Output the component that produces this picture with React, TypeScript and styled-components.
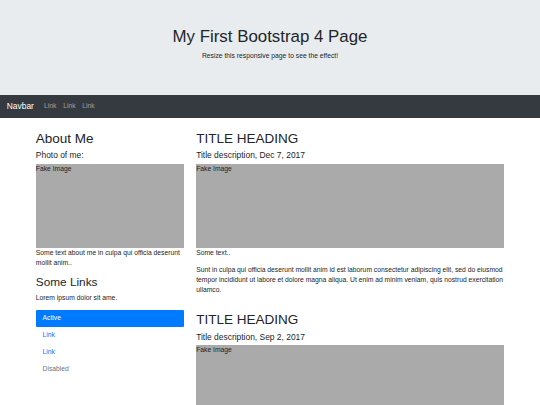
import React from "react";
import styled, { createGlobalStyle } from "styled-components";

const GlobalStyle = createGlobalStyle`
  *, *::before, *::after { box-sizing: border-box; }
  html, body { margin: 0; padding: 0; }
  body {
    font-family: "Liberation Sans", Arial, sans-serif;
    font-size: 6.75px;
    line-height: 1.5;
    color: #212529;
    background: #fff;
  }
`;

const Jumbotron = styled.header`
  background: #e9ecef;
  padding: 27px 13.5px;
  text-align: center;
`;

const Title = styled.h1`
  margin: 0 0 3.375px;
  font-size: 16.875px;
  line-height: 1.2;
  font-weight: 500;
`;

const Lead = styled.p`
  margin: 0 0 6.75px;
`;

const Navbar = styled.nav`
  display: flex;
  align-items: center;
  background: #343a40;
  padding: 3.375px 6.75px;
`;

const Brand = styled.a`
  color: #fff;
  font-size: 8.4375px;
  line-height: 1.5;
  padding: 1.32px 0;
  margin-right: 6.75px;
  text-decoration: none;
`;

const NavList = styled.ul`
  display: flex;
  list-style: none;
  margin: 0;
  padding: 0;
`;

const NavLink = styled.a`
  display: block;
  padding: 3.375px;
  color: rgba(255, 255, 255, 0.5);
  text-decoration: none;
`;

const Container = styled.main`
  width: 481px;
  margin: 12.66px auto 0;
  padding: 0 6.33px;
`;

const Row = styled.div`
  display: flex;
  margin: 0 -6.33px;
`;

const Column = styled.section<{ $span: number }>`
  flex: 0 0 ${(p) => (p.$span / 12) * 100}%;
  max-width: ${(p) => (p.$span / 12) * 100}%;
  padding: 0 6.33px;
`;

const H2 = styled.h2`
  margin: 0 0 3.375px;
  font-size: 13.5px;
  line-height: 1.2;
  font-weight: 500;
`;

const H3 = styled.h3`
  margin: 0 0 3.375px;
  font-size: 11.8125px;
  line-height: 1.2;
  font-weight: 500;
`;

const H5 = styled.h5`
  margin: 0 0 3.375px;
  font-size: 8.4375px;
  line-height: 1.2;
  font-weight: 500;
`;

const FakeImg = styled.div`
  height: 84.375px;
  background: #aaa;
`;

const Paragraph = styled.p`
  margin: 0 0 6.75px;
`;

const Spacer = styled.div`
  height: 10.125px;
`;

const PillList = styled.ul`
  display: flex;
  flex-direction: column;
  list-style: none;
  margin: 0;
  padding: 0;
`;

const Pill = styled.a<{ $variant?: "active" | "disabled" }>`
  display: block;
  padding: 3.375px 6.75px;
  border-radius: 1.05px;
  text-decoration: none;
  background: ${(p) => (p.$variant === "active" ? "#007bff" : "transparent")};
  color: ${(p) =>
    p.$variant === "active" ? "#fff" : p.$variant === "disabled" ? "#6c757d" : "#007bff"};
`;

const posts = [
  { date: "Dec 7, 2017" },
  { date: "Sep 2, 2017" },
];

export default function App() {
  return (
    <>
      <GlobalStyle />
      <Jumbotron>
        <Title>My First Bootstrap 4 Page</Title>
        <Lead>Resize this responsive page to see the effect!</Lead>
      </Jumbotron>
      <Navbar>
        <Brand href="#">Navbar</Brand>
        <NavList>
          <li><NavLink href="#">Link</NavLink></li>
          <li><NavLink href="#">Link</NavLink></li>
          <li><NavLink href="#">Link</NavLink></li>
        </NavList>
      </Navbar>
      <Container>
        <Row>
          <Column $span={4}>
            <H2>About Me</H2>
            <H5>Photo of me:</H5>
            <FakeImg>Fake Image</FakeImg>
            <Paragraph>Some text about me in culpa qui officia deserunt mollit anim..</Paragraph>
            <H3>Some Links</H3>
            <Paragraph>Lorem ipsum dolor sit ame.</Paragraph>
            <PillList>
              <li><Pill href="#" $variant="active">Active</Pill></li>
              <li><Pill href="#">Link</Pill></li>
              <li><Pill href="#">Link</Pill></li>
              <li><Pill $variant="disabled">Disabled</Pill></li>
            </PillList>
          </Column>
          <Column $span={8}>
            {posts.map((post, i) => (
              <React.Fragment key={post.date}>
                {i > 0 && <Spacer />}
                <H2>TITLE HEADING</H2>
                <H5>Title description, {post.date}</H5>
                <FakeImg>Fake Image</FakeImg>
                <Paragraph>Some text..</Paragraph>
                <Paragraph>
                  Sunt in culpa qui officia deserunt mollit anim id est laborum consectetur
                  adipiscing elit, sed do eiusmod tempor incididunt ut labore et dolore magna
                  aliqua. Ut enim ad minim veniam, quis nostrud exercitation ullamco.
                </Paragraph>
              </React.Fragment>
            ))}
          </Column>
        </Row>
      </Container>
    </>
  );
}
